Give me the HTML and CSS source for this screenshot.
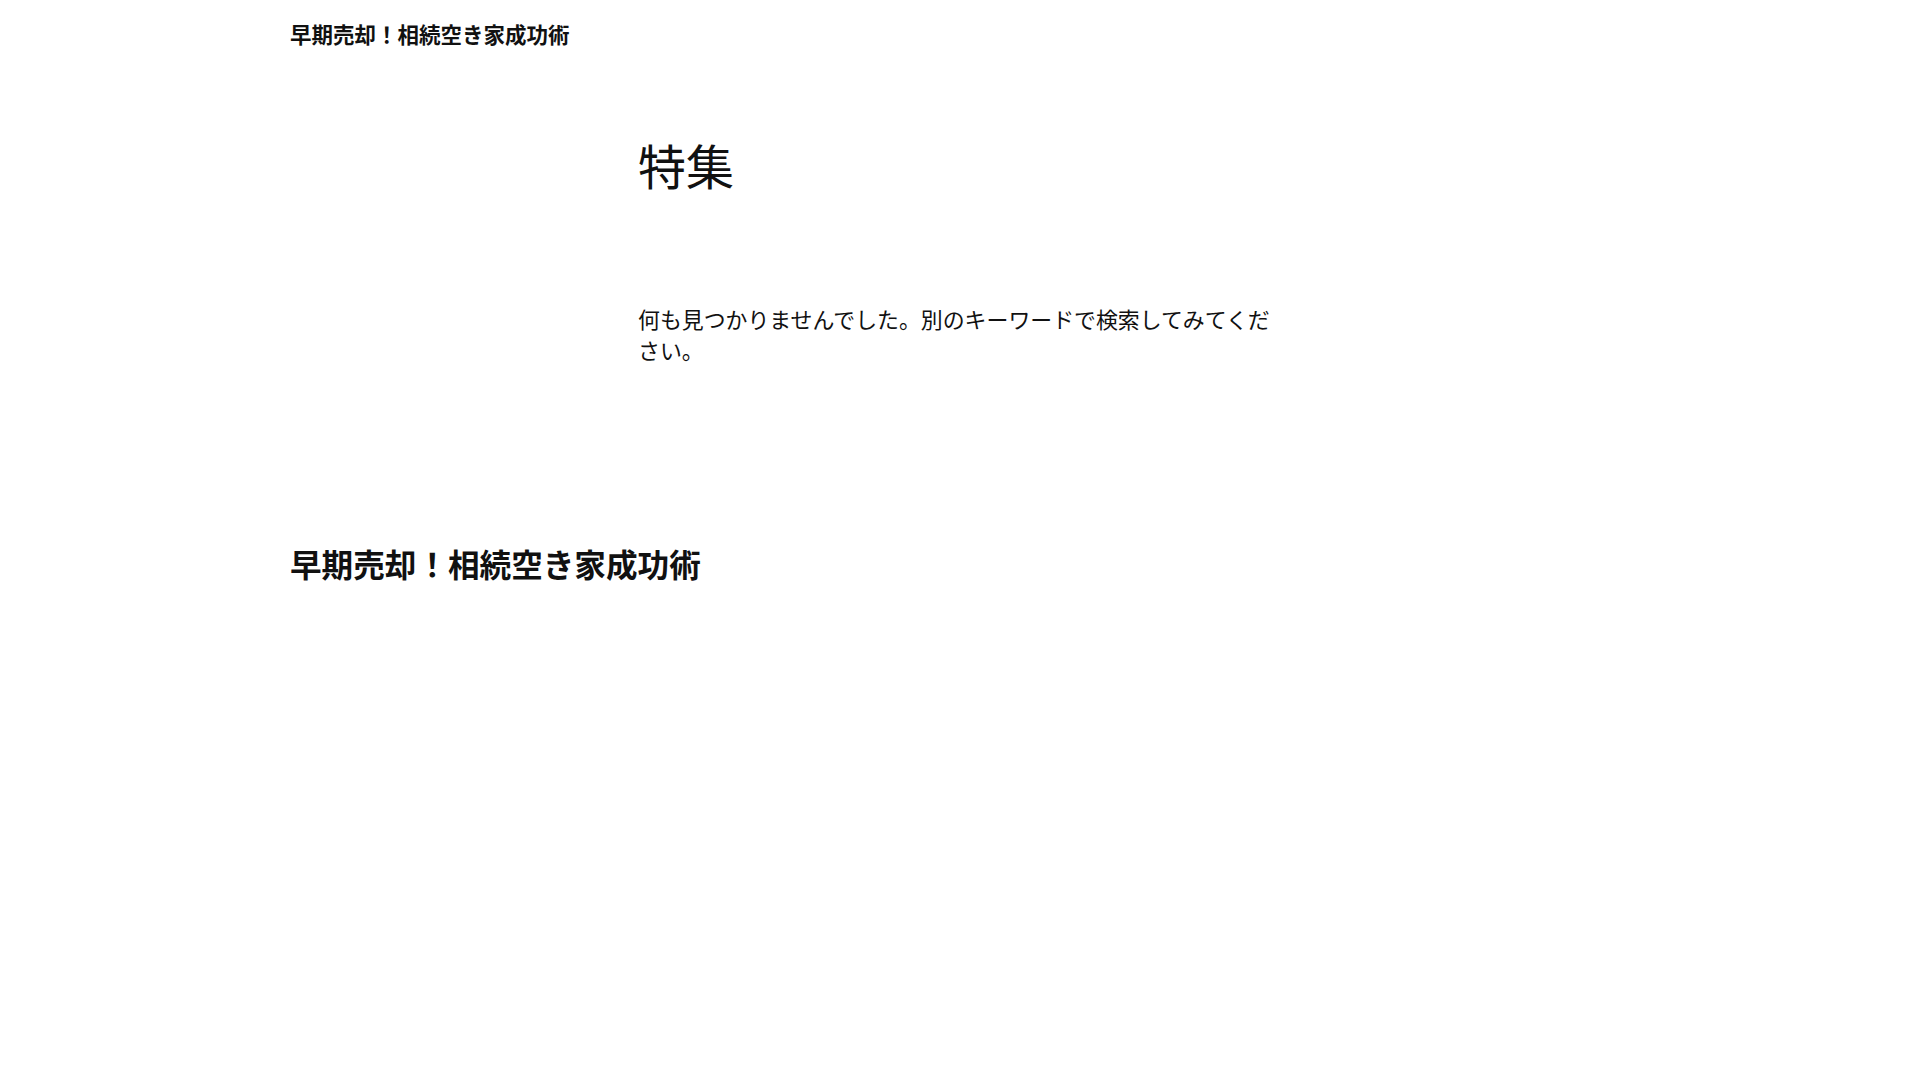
FILE: index.html
```html
<!DOCTYPE html>
<html lang="ja">
<head>
<meta charset="utf-8">
<title>特集 | 早期売却！相続空き家成功術</title>
<link rel="stylesheet" href="styles.css">
</head>
<body>
<header class="site-header">
  <div class="container">
    <p class="site-title">早期売却！相続空き家成功術</p>
  </div>
</header>
<main class="site-main">
  <div class="content">
    <h1 class="page-title">特集</h1>
    <p class="no-results">何も見つかりませんでした。別のキーワードで検索してみてください。</p>
  </div>
</main>
<footer class="site-footer">
  <div class="container">
    <p class="footer-title">早期売却！相続空き家成功術</p>
  </div>
</footer>
</body>
</html>
```

FILE: styles.css
```css
html, body {
  margin: 0;
  padding: 0;
  background: #ffffff;
}
body {
  font-family: "Noto Sans CJK JP", "Noto Sans", sans-serif;
  color: #111111;
}
.container {
  width: 1340px;
  margin: 0 auto;
}
.site-header {
  padding-top: 17px;
}
.site-title {
  margin: 0;
  font-size: 21.5px;
  font-weight: 700;
  line-height: 33px;
}
.site-main {
  padding-top: 86px;
}
.content {
  width: 644px;
  margin: 0 auto;
}
.page-title {
  margin: 0;
  font-size: 48px;
  font-weight: 400;
  line-height: 57.6px;
}
.no-results {
  margin: 109px 0 0;
  font-size: 21.9px;
  line-height: 31.2px;
}
.site-footer {
  padding-top: 179px;
}
.footer-title {
  margin: 0;
  font-size: 31.6px;
  font-weight: 700;
  line-height: 38.4px;
}
```
